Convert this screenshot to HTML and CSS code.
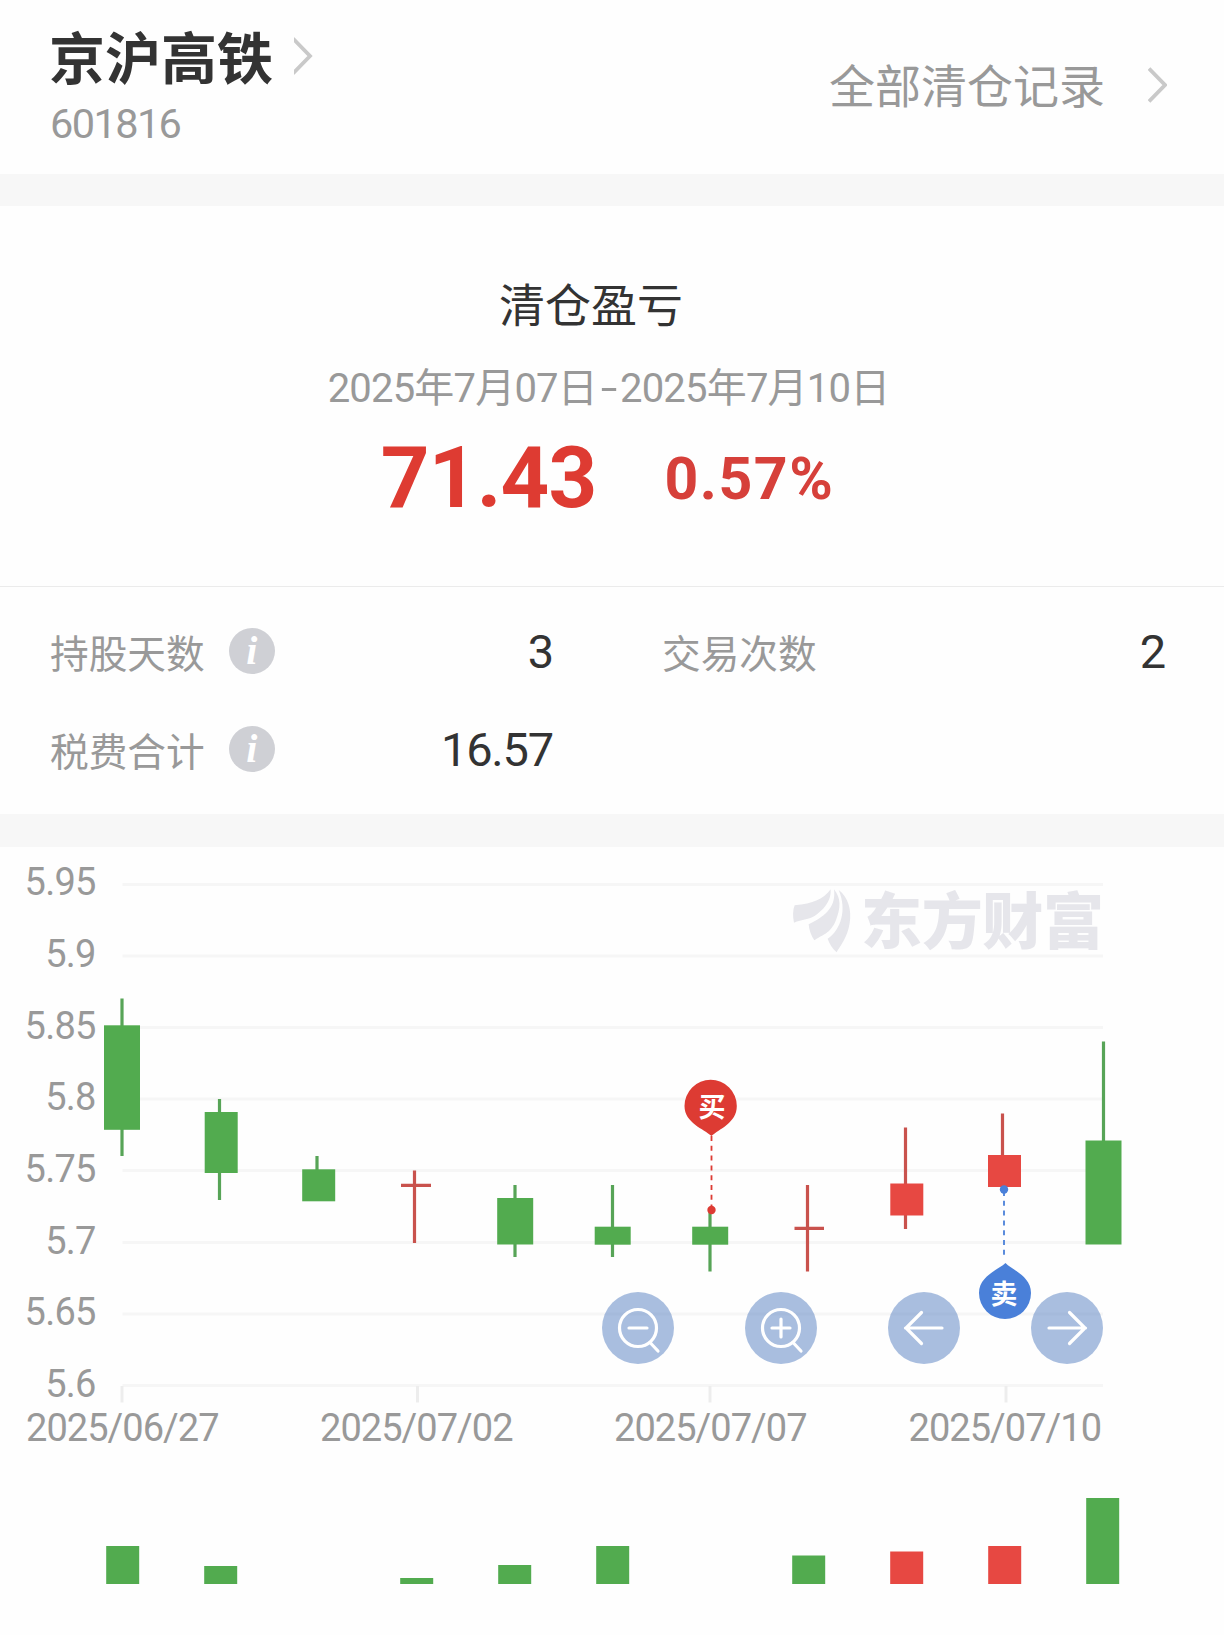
FILE: index.html
```html
<!DOCTYPE html>
<html lang="zh-CN">
<head>
  <meta charset="UTF-8">
  <meta name="viewport" content="width=device-width, initial-scale=1.0">
  <title>京沪高铁 601816</title>
  <link rel="stylesheet" href="styles.css">
</head>
<body>
  <header class="stock-header">
    <div class="stock">
      <h1 class="stock-name">京沪高铁
        <svg class="chevron" width="19" height="38" viewBox="0 0 19 38"><path d="M-1 1.500L16 19L-1 36.500"/></svg>
      </h1>
      <p class="stock-code">601816</p>
    </div>
    <a class="all-records"><span>全部清仓记录</span>
      <svg class="chevron" width="19" height="38" viewBox="0 0 19 38"><path d="M1 2.500L17 19L1 35.500"/></svg>
    </a>
  </header>

  <section class="profit">
    <h2 class="profit-title">清仓盈亏</h2>
    <p class="profit-date">2025年7月07日<span class="dash">-</span>2025年7月10日</p>
    <div class="profit-values">
      <span class="amount">71.43</span>
      <span class="percent">0.57%</span>
    </div>
  </section>

  <section class="stats">
    <div class="stat">
      <span class="label">持股天数</span><span class="info">i</span>
      <span class="value">3</span>
    </div>
    <div class="stat">
      <span class="label">交易次数</span>
      <span class="value">2</span>
    </div>
    <div class="stat">
      <span class="label">税费合计</span><span class="info">i</span>
      <span class="value">16.57</span>
    </div>
  </section>

  <section class="chart">
    <svg class="chart-svg" width="1224" height="788" viewBox="0 847 1224 788">
      <!-- grid -->
      <g class="grid">
        <path d="M122.500 884.500H1103M122.500 956H1103M122.500 1027.500H1103M122.500 1099H1103M122.500 1170.500H1103M122.500 1242.500H1103M122.500 1314H1103M122.500 1385.500H1103"/>
        <path class="tick" d="M122 1386v16.500M417.500 1386v16.500M710 1386v16.500M1006 1386v16.500"/>
      </g>

      <!-- watermark -->
      <g class="watermark">
        <g transform="translate(760 860) scale(.3333)">
          <path d="M212 88C190 118 160 131 104 136C98 150 98 170 102 188C125 178 150 180 172 162C198 142 214 118 212 88Z"/>
          <path d="M222 88C228 135 205 165 146 193C147 210 154 228 163 241C185 225 212 222 228 180C242 145 244 115 222 88Z"/>
          <path d="M236 90C262 150 242 210 203 236C208 252 218 266 230 277C240 258 262 235 269 190C276 150 264 110 236 90Z"/>
        </g>
        <text x="861" y="944" textLength="243">东方财富</text>
      </g>

      <!-- price axis -->
      <g class="axis price">
        <text x="95.500" y="894.500">5.95</text>
        <text x="95.500" y="966.500">5.9</text>
        <text x="95.500" y="1038.500">5.85</text>
        <text x="95.500" y="1110">5.8</text>
        <text x="95.500" y="1182">5.75</text>
        <text x="95.500" y="1254">5.7</text>
        <text x="95.500" y="1325">5.65</text>
        <text x="95.500" y="1397">5.6</text>
      </g>

      <!-- date axis -->
      <g class="axis">
        <text x="26" y="1441" textLength="193.500">2025/06/27</text>
        <text x="320" y="1441" textLength="193.500">2025/07/02</text>
        <text x="614" y="1441" textLength="193.500">2025/07/07</text>
        <text x="908.500" y="1441" textLength="193.500">2025/07/10</text>
      </g>

      <!-- candles -->
      <g class="wick down">
        <path d="M122 998.500V1156M219.500 1099V1200M317 1156V1180M515 1185V1257M612.500 1185V1257M710 1211V1271.500M1103.500 1041.500V1150"/>
      </g>
      <g class="wick up">
        <path d="M414.500 1170.500V1243M401 1185.300H431M807.500 1185V1271.500M794.500 1228.300H824M905.500 1127.500V1229M1002.500 1113.500V1160"/>
      </g>
      <g class="down">
        <rect x="104" y="1025.300" width="36" height="104.500"/>
        <rect x="204.700" y="1112" width="33" height="61"/>
        <rect x="302.200" y="1169.300" width="33" height="32"/>
        <rect x="497.200" y="1198" width="36" height="46.500"/>
        <rect x="594.700" y="1226.700" width="36" height="18"/>
        <rect x="692.200" y="1226.700" width="36" height="18"/>
        <rect x="1085.500" y="1140.500" width="36" height="104"/>
      </g>
      <g class="up">
        <rect x="890.300" y="1183.500" width="33" height="32"/>
        <rect x="988" y="1155" width="33" height="32"/>
      </g>

      <!-- volume -->
      <g class="down">
        <rect x="106.200" y="1546" width="33" height="38"/>
        <rect x="204.200" y="1566" width="33" height="18"/>
        <rect x="400.200" y="1578" width="33" height="6"/>
        <rect x="498.200" y="1565" width="33" height="19"/>
        <rect x="596.200" y="1546" width="33" height="38"/>
        <rect x="792.200" y="1555.500" width="33" height="28.500"/>
        <rect x="1086.200" y="1498" width="33" height="86"/>
      </g>
      <g class="up">
        <rect x="890.200" y="1551.500" width="33" height="32.500"/>
        <rect x="988.200" y="1546" width="33" height="38"/>
      </g>

      <!-- buy / sell marks -->
      <g class="mark buy">
        <path class="lead" d="M711.500 1136V1207"/>
        <circle cx="711.500" cy="1210" r="4.200"/>
        <path d="M711.500 1136C704 1129 684.500 1123 684.500 1106A26 26 0 0 1 736.800 1106C736.800 1123 719 1129 711.500 1136Z"/>
        <text x="712" y="1116.500">买</text>
      </g>
      <g class="mark sell">
        <path class="lead" d="M1004 1191V1257"/>
        <circle cx="1004" cy="1189.500" r="4.200"/>
        <path d="M1005.500 1263C1012 1270 1031 1276 1031 1293A26 26 0 0 1 979 1293C979 1276 998 1270 1005.500 1263Z"/>
        <text x="1004" y="1303.500">卖</text>
      </g>
    </svg>

    <div class="controls">
      <button aria-label="缩小"><svg viewBox="0 0 72 72"><path d="M27 36h18M48 50.500l8 8.500"/><circle cx="36" cy="36" r="18.500"/></svg></button>
      <button aria-label="放大"><svg viewBox="0 0 72 72"><path d="M27 36h18M36 27v18M48 50.500l8 8.500"/><circle cx="36" cy="36" r="18.500"/></svg></button>
      <button aria-label="左移"><svg viewBox="0 0 72 72"><path d="M54 36H17.500M33.500 20.500L18 36L33.500 51.500"/></svg></button>
      <button aria-label="右移"><svg viewBox="0 0 72 72"><path d="M18 36H54.500M38.500 20.500L54 36L38.500 51.500"/></svg></button>
    </div>
  </section>
</body>
</html>
```
FILE: styles.css
```css
* {
  box-sizing: border-box;
}

body {
  margin: 0;
  background: #fefefe;
  color: #333;
  font-family: Roboto, "Noto Sans CJK SC", sans-serif;
}

h1, h2, p {
  margin: 0;
}

.chevron path {
  fill: none;
  stroke: #c9c9c9;
  stroke-width: 3.8;
}

/* header */
.stock-header {
  display: flex;
  justify-content: space-between;
  height: 206px;
  padding: 20px 57px 0 49px;
  border-bottom: 32px solid #f7f7f7;
}

.stock-name {
  display: flex;
  align-items: center;
  gap: 21px;
  height: 72px;
  font-size: 56px;
  font-weight: 700;
  line-height: 72px;
  padding-top: 8px;
}

.stock-name .chevron {
  margin-top: -8px;
}

.stock-code {
  margin: 8px 0 0 1px;
  font-size: 41.5px;
  line-height: 48px;
  letter-spacing: -1.6px;
  color: #999;
}

.all-records {
  display: flex;
  align-items: center;
  gap: 43px;
  height: 130px;
  font-size: 46px;
  color: #999;
}

.all-records span {
  margin-top: -4px;
}

/* profit */
.profit {
  height: 381px;
  padding-top: 72px;
  border-bottom: 1px solid #ebebeb;
  text-align: center;
}

.profit-title {
  padding-right: 42px;
  font-size: 46px;
  font-weight: 400;
  line-height: 56px;
}

.profit-date {
  margin: 30px 7px 0 0;
  font-size: 40px;
  line-height: 50px;
  letter-spacing: -0.8px;
  color: #999;
}

.dash {
  display: inline-block;
  width: 23px;
  transform: scaleX(1.5);
}

.profit-values {
  display: flex;
  justify-content: center;
  align-items: center;
  gap: 68px;
  height: 100px;
  margin-top: 14px;
  padding-right: 9px;
  font-weight: 700;
}

.amount {
  font-size: 85px;
  letter-spacing: -0.8px;
  color: #de3b32;
}

.percent {
  font-size: 59px;
  letter-spacing: 1.5px;
  color: #d6403a;
}

/* stats */
.stats {
  display: grid;
  grid-template-columns: 1fr 1fr;
  grid-auto-rows: 98px;
  height: 260px;
  padding-top: 15px;
  border-bottom: 33px solid #f7f7f7;
}

.stat {
  display: flex;
  align-items: center;
  padding: 0 59px 0 50px;
}

.label {
  font-size: 38.7px;
  color: #999;
}

.info {
  width: 46px;
  height: 46px;
  margin-left: 24px;
  border-radius: 50%;
  background: #cfd0d5;
  color: #fff;
  font: italic bold 40px/45px "Liberation Serif", serif;
  text-align: center;
}

.value {
  margin-left: auto;
  font-size: 47px;
  letter-spacing: -1.2px;
}

/* chart */
.chart {
  position: relative;
}

.chart-svg {
  display: block;
}

.grid path {
  fill: none;
  stroke: #f6f6f6;
  stroke-width: 3;
}

.grid .tick {
  stroke: #ededed;
}

.watermark {
  fill: #e6e6eb;
}

.watermark text {
  font-size: 61px;
  font-weight: 900;
}

.axis text {
  font-size: 38px;
  fill: #999;
}

.price text {
  text-anchor: end;
  letter-spacing: -0.8px;
}

.down {
  fill: #52ab4f;
}

.up {
  fill: #e74842;
}

.wick path {
  fill: none;
  stroke-width: 3.2;
}

.wick.down path {
  stroke: #57a457;
}

.wick.up path {
  stroke: #c9524d;
}

.buy {
  fill: #dd3b33;
  stroke: #dd3b33;
}

.sell {
  fill: #4a80d9;
  stroke: #4a80d9;
}

.mark path,
.mark circle {
  stroke-width: 0;
}

.mark .lead {
  stroke-width: 1.8;
  stroke-dasharray: 5 4.8;
}

.mark text {
  font-size: 27px;
  font-weight: 700;
  text-anchor: middle;
  fill: #fff;
  stroke: none;
}

.controls {
  position: absolute;
  top: 445px;
  left: 602px;
  display: flex;
  gap: 71px;
}

.controls button {
  width: 72px;
  height: 72px;
  padding: 0;
  border: none;
  border-radius: 50%;
  background: rgba(66, 113, 186, 0.45);
}

.controls svg {
  display: block;
  fill: none;
  stroke: #fff;
  stroke-width: 3.2;
  stroke-linecap: round;
}
```
